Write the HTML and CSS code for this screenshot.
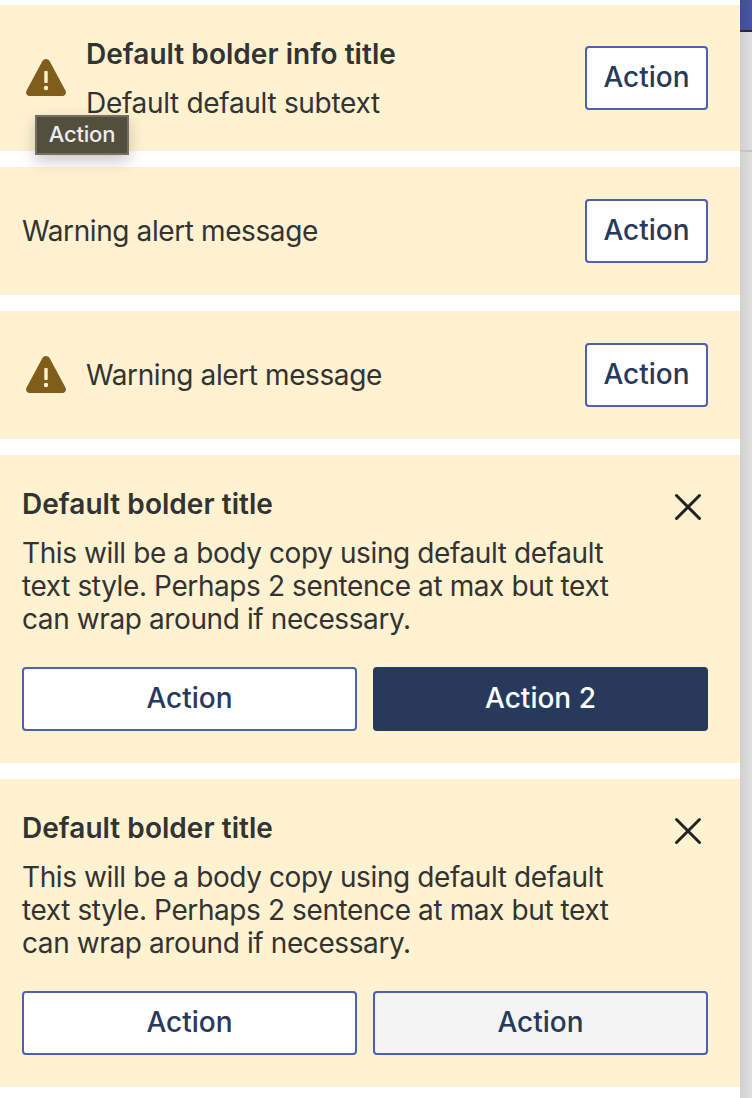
FILE: index.html
```html
<!DOCTYPE html>
<html lang="en">
<head>
<meta charset="utf-8">
<title>Warning alerts</title>
<link rel="stylesheet" href="styles.css">
</head>
<body>
<div class="page">
  <main class="alerts">
    <section class="alert alert-row">
      <svg class="warning-icon" viewBox="0 0 48 48" aria-hidden="true">
        <path class="warning-shape" d="M20.3 7.2Q21.6 5 24 5Q26.4 5 27.7 7.2L43.3 36.2C44.9 39.2 43.2 42 40 42H8C4.800 42 3.100 39.200 4.700 36.200Z"/>
        <rect class="warning-mark" x="22.300" y="17" width="3.400" height="12" rx="0.800"/>
        <circle class="warning-mark" cx="24" cy="34" r="2.200"/>
      </svg>
      <div class="alert-text alert-text-titled">
        <h2 class="title">Default bolder info title</h2>
        <p class="body body-subtext">Default default subtext</p>
      </div>
      <button class="button">Action</button>
      <div class="tooltip">Action</div>
    </section>
    <section class="alert alert-row">
      <div class="alert-text"><p class="body">Warning alert message</p></div>
      <button class="button">Action</button>
    </section>
    <section class="alert alert-row">
      <svg class="warning-icon" viewBox="0 0 48 48" aria-hidden="true">
        <path class="warning-shape" d="M20.3 7.2Q21.6 5 24 5Q26.4 5 27.7 7.2L43.3 36.2C44.9 39.2 43.2 42 40 42H8C4.800 42 3.100 39.200 4.700 36.200Z"/>
        <rect class="warning-mark" x="22.300" y="17" width="3.400" height="12" rx="0.800"/>
        <circle class="warning-mark" cx="24" cy="34" r="2.200"/>
      </svg>
      <div class="alert-text"><p class="body">Warning alert message</p></div>
      <button class="button">Action</button>
    </section>
    <section class="alert alert-stack">
      <div class="alert-head">
        <div class="alert-text alert-text-titled">
          <h2 class="title">Default bolder title</h2>
          <p class="body">This will be a body copy using default default text style. Perhaps 2 sentence at max but text can wrap around if necessary.</p>
        </div>
        <svg class="close-icon" viewBox="0 0 40 40" role="img" aria-label="Close"><path d="M8.500 8.500 31.500 31.500M31.500 8.500 8.500 31.500"/></svg>
      </div>
      <div class="actions">
        <button class="button">Action</button>
        <button class="button button-primary">Action 2</button>
      </div>
    </section>
    <section class="alert alert-stack">
      <div class="alert-head">
        <div class="alert-text alert-text-titled">
          <h2 class="title">Default bolder title</h2>
          <p class="body">This will be a body copy using default default text style. Perhaps 2 sentence at max but text can wrap around if necessary.</p>
        </div>
        <svg class="close-icon" viewBox="0 0 40 40" role="img" aria-label="Close"><path d="M8.500 8.500 31.500 31.500M31.500 8.500 8.500 31.500"/></svg>
      </div>
      <div class="actions">
        <button class="button">Action</button>
        <button class="button button-muted">Action</button>
      </div>
    </section>
  </main>
  <aside class="backdrop">
    <div class="backdrop-bar"></div>
    <div class="backdrop-head"></div>
  </aside>
</div>
</body>
</html>
```
FILE: styles.css
```css
* {
  box-sizing: border-box;
}

body {
  margin: 0;
  background: #fff;
  color: #333;
  font-family: Inter, "Liberation Sans", sans-serif;
  font-size: 28px;
  line-height: 33px;
}

.page {
  display: flex;
  height: 1098px;
  overflow: hidden;
}

.alerts {
  display: flex;
  flex-direction: column;
  gap: 16px;
  width: 740px;
  padding-top: 5px;
}

.alert {
  position: relative;
  display: flex;
  padding: 32px 32px 32px 22px;
  background: #fef2d1;
}

.alert-row {
  align-items: center;
  gap: 16px;
}

.alert-stack {
  flex-direction: column;
  gap: 32px;
}

.alert-head {
  display: flex;
  justify-content: space-between;
  gap: 36px;
}

.alert-text {
  display: flex;
  flex: 1;
  flex-direction: column;
  gap: 16px;
}

.alert-text-titled {
  margin-bottom: -1px;
  padding-top: 1px;
}

.title,
.body {
  margin: 0;
  font-size: 28px;
}

.title {
  font-weight: 600;
  letter-spacing: 0.04px;
}

.body {
  font-weight: 400;
  letter-spacing: -0.4px;
}

.body-subtext {
  letter-spacing: -0.31px;
}

.warning-icon {
  flex: none;
  width: 48px;
  height: 48px;
}

.warning-shape {
  fill: #805d1b;
}

.warning-mark {
  fill: #fef2d1;
}

.close-icon {
  flex: none;
  width: 40px;
  height: 40px;
  fill: none;
  stroke: #222;
  stroke-width: 3;
  stroke-linecap: round;
}

.actions {
  display: grid;
  grid-template-columns: 1fr 1fr;
  gap: 16px;
}

.button {
  min-width: 123px;
  height: 64px;
  padding: 0 0 1px;
  border: 2px solid #4c60b5;
  border-radius: 4px;
  background: #fff;
  color: #283a5b;
  font: 550 28px/33px Inter, "Liberation Sans", sans-serif;
}

.button-primary {
  border-color: #283a5b;
  background: #283a5b;
  color: #fff;
}

.button-muted {
  background: #f4f4f4;
}

.tooltip {
  position: absolute;
  top: 110px;
  left: 35px;
  z-index: 1;
  width: 94px;
  height: 40px;
  border: 2px solid #747061;
  background: #544e3f;
  box-shadow: 0 6px 16px rgba(0, 0, 0, 0.22);
  color: #ececea;
  font-size: 22px;
  font-weight: 500;
  line-height: 34px;
  text-align: center;
  letter-spacing: -0.2px;
}

.backdrop {
  width: 12px;
  background: linear-gradient(90deg, #d0d0d0, #dfdfdf);
}

.backdrop-bar {
  height: 32px;
  border-bottom: 2px solid #2a2a2c;
  background: linear-gradient(90deg, #414e93, #4656a4);
}

.backdrop-head {
  height: 120px;
  border-bottom: 2px solid #c4c4c4;
}
```
